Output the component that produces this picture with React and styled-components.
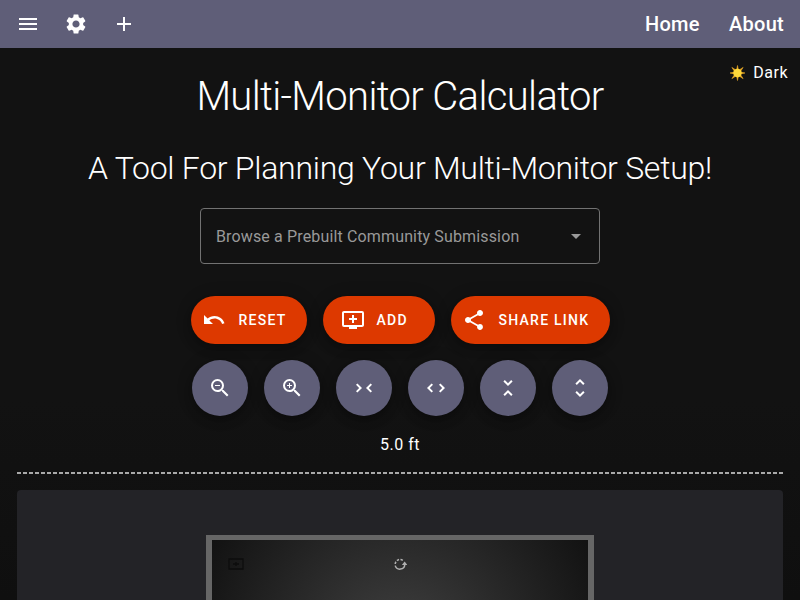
import React from "react";
import styled, { createGlobalStyle } from "styled-components";
import {
  MdMenu, MdSettings, MdAdd, MdUndo, MdAddToQueue, MdShare, MdZoomOut, MdZoomIn,
  MdUnfoldLess, MdUnfoldMore, MdArrowDropDown,
} from "react-icons/md";

const GlobalStyle = createGlobalStyle`
  * { box-sizing: border-box; }
  body { margin: 0; background: #121212; color: #fff; font-family: Roboto, sans-serif; overflow: hidden; }
`;

const Page = styled.div`
  height: 600px;
  overflow: hidden;
  position: relative;
  background: linear-gradient(#121212 400px, #0f0f0f 600px);
`;

const Toolbar = styled.header`
  height: 48px;
  display: flex;
  align-items: center;
  justify-content: space-between;
  padding: 0 16px 0 4px;
  background: #5f5e78;
`;

const ToolGroup = styled.div`
  display: flex;
`;

const IconButton = styled.button`
  width: 48px;
  height: 48px;
  display: grid;
  place-items: center;
  padding: 0;
  border: 0;
  background: none;
  color: #fff;
`;

const Nav = styled.nav`
  display: flex;
  gap: 29.5px;
`;

const NavLink = styled.a`
  font-size: 20px;
  font-weight: 500;
  line-height: 32px;
  letter-spacing: 0.25px;
`;

const ThemeToggle = styled.div`
  position: absolute;
  top: 61px;
  right: 12px;
  display: flex;
  align-items: center;
  gap: 8px;
  font-size: 16px;
  line-height: 24px;
  letter-spacing: 0.5px;
`;

const Content = styled.main`
  display: flex;
  flex-direction: column;
  align-items: center;
`;

const Title = styled.h1`
  margin: 25px 0 0;
  font-size: 40px;
  font-weight: 300;
  line-height: 48px;
  letter-spacing: -0.65px;
`;

const Subtitle = styled.h2`
  margin: 23px 0 0;
  font-size: 32px;
  font-weight: 300;
  line-height: 48px;
  letter-spacing: -0.27px;
`;

const Select = styled.div`
  width: 400px;
  height: 56px;
  margin-top: 16px;
  padding: 0 11px 0 15px;
  display: flex;
  align-items: center;
  justify-content: space-between;
  border: 1px solid #727272;
  border-radius: 4px;
  color: #999;
  font-size: 16px;
  letter-spacing: 0.144px;
`;

const Actions = styled.div`
  display: flex;
  gap: 16px;
  margin-top: 32px;
`;

const shadow = "0 3px 5px -1px rgba(0,0,0,.2), 0 6px 10px rgba(0,0,0,.14), 0 1px 18px rgba(0,0,0,.12)";

const ActionButton = styled.button`
  width: ${(p) => p.$width}px;
  height: 48px;
  display: flex;
  align-items: center;
  gap: ${(p) => p.$gap}px;
  padding: 0 0 0 ${(p) => p.$inset}px;
  border: 0;
  border-radius: 24px;
  background: #dd3900;
  color: #fff;
  font: 500 14px Roboto, sans-serif;
  letter-spacing: 1.25px;
  white-space: nowrap;
  box-shadow: ${shadow};
`;

const RoundRow = styled.div`
  display: flex;
  gap: 16px;
  margin-top: 16px;
`;

const RoundButton = styled.button`
  width: 56px;
  height: 56px;
  display: grid;
  place-items: center;
  padding: 0;
  border: 0;
  border-radius: 50%;
  background: #5f5e78;
  color: #fff;
  box-shadow: ${shadow};

  svg { transform: rotate(${(p) => p.$turn || 0}deg); }
`;

const Scale = styled.div`
  width: 766px;
  height: 58px;
  padding-top: 17px;
  text-align: center;
  font-size: 16px;
  line-height: 24px;
  letter-spacing: 0.5px;
  background: repeating-linear-gradient(90deg, #a9a9a9 0 4px, transparent 4px 6px) left bottom / 100% 2px no-repeat;
`;

const Canvas = styled.section`
  width: 766px;
  height: 400px;
  margin-top: 16px;
  padding-top: 45px;
  display: flex;
  justify-content: center;
  align-items: flex-start;
  background: #232327;
  border-radius: 4px;
`;

const Monitor = styled.div`
  width: 388px;
  height: 222px;
  padding: 17px 16px 0;
  display: grid;
  grid-template-columns: 1fr auto 1fr;
  align-items: start;
  border: solid #666;
  border-width: 5px 6px;
  background: radial-gradient(circle, #404040 0%, #121212 100%);
`;

const Sun = () => (
  <svg width="15" height="16" viewBox="0 0 16 16">
    <path
      d="M8 0l1 5h-2zM8 16l1-5h-2zM0 8l5-1v2zM16 8l-5-1v2zM2 2l4.3 2.8-1.5 1.5zM14 2l-4.3 2.8 1.5 1.5zM2 14l4.3-2.8-1.5-1.5zM14 14l-4.3-2.8 1.5-1.5z"
      fill="#f0ae28"
      stroke="#f0ae28"
      strokeWidth="0.6"
    />
    <circle cx="8" cy="8" r="4.5" fill="#ffd93a" />
  </svg>
);

const MonitorPlus = () => (
  <svg width="16" height="14" viewBox="0 0 16 14" fill="none" stroke="#0d0d0d" strokeWidth="1.3">
    <path d="M1 2h14v10H1zM5 7h6M8 5v4" />
  </svg>
);

const Rotate = () => (
  <svg width="14" height="15" viewBox="0 0 14 15" fill="none" stroke="#b0b0b0" strokeWidth="1.5">
    <path d="M2.2 8.6A4.9 4.9 0 0 0 11.8 7.5" />
    <path d="M2.2 7A4.9 4.9 0 0 1 10.8 4.2" strokeDasharray="2.4 1.4" />
    <path d="M8.9 8 11.6 4.6 14.3 8z" fill="#b0b0b0" stroke="none" />
  </svg>
);

export default function App() {
  return (
    <Page>
      <GlobalStyle />
      <Toolbar>
        <ToolGroup>
          <IconButton aria-label="Menu"><MdMenu size={24} /></IconButton>
          <IconButton aria-label="Settings"><MdSettings size={24} /></IconButton>
          <IconButton aria-label="Add"><MdAdd size={24} /></IconButton>
        </ToolGroup>
        <Nav>
          <NavLink>Home</NavLink>
          <NavLink>About</NavLink>
        </Nav>
      </Toolbar>
      <ThemeToggle><Sun />Dark</ThemeToggle>
      <Content>
        <Title>Multi-Monitor Calculator</Title>
        <Subtitle>A Tool For Planning Your Multi-Monitor Setup!</Subtitle>
        <Select>Browse a Prebuilt Community Submission<MdArrowDropDown size={24} /></Select>
        <Actions>
          <ActionButton $width={116} $inset={11} $gap={13}><MdUndo size={24} />RESET</ActionButton>
          <ActionButton $width={112} $inset={18} $gap={12}><MdAddToQueue size={24} />ADD</ActionButton>
          <ActionButton $width={159} $inset={11} $gap={13}><MdShare size={24} />SHARE LINK</ActionButton>
        </Actions>
        <RoundRow>
          <RoundButton aria-label="Zoom out"><MdZoomOut size={24} /></RoundButton>
          <RoundButton aria-label="Zoom in"><MdZoomIn size={24} /></RoundButton>
          <RoundButton aria-label="Narrower" $turn={90}><MdUnfoldLess size={24} /></RoundButton>
          <RoundButton aria-label="Wider" $turn={90}><MdUnfoldMore size={24} /></RoundButton>
          <RoundButton aria-label="Shorter"><MdUnfoldLess size={24} /></RoundButton>
          <RoundButton aria-label="Taller"><MdUnfoldMore size={24} /></RoundButton>
        </RoundRow>
        <Scale>5.0 ft</Scale>
        <Canvas>
          <Monitor><MonitorPlus /><Rotate /></Monitor>
        </Canvas>
      </Content>
    </Page>
  );
}
